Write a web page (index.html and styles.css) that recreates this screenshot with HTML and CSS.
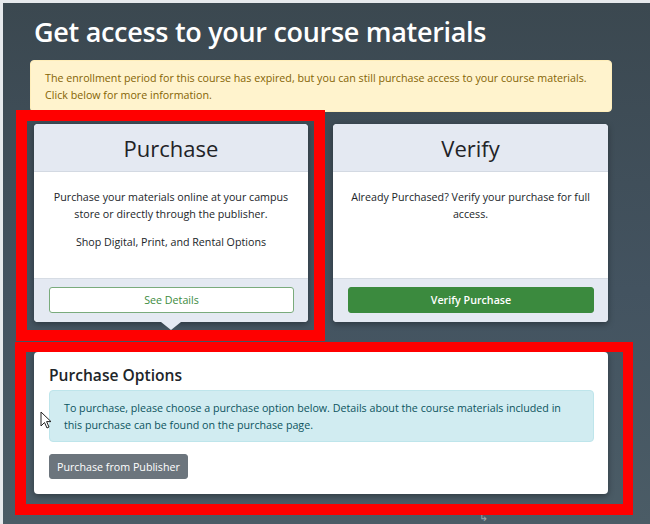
FILE: index.html
```html
<!DOCTYPE html>
<html lang="en">
<head>
<meta charset="utf-8">
<title>Get access to your course materials</title>
<link rel="stylesheet" href="styles.css">
</head>
<body>
<div class="page">
  <h1 class="title">Get access to your course materials</h1>
  <div class="alert alert-warning">The enrollment period for this course has expired, but you can still purchase access to your course materials. Click below for more information.</div>
  <div class="cards">
    <div class="card card-active">
      <div class="card-head">Purchase</div>
      <div class="card-body">
        <p>Purchase your materials online at your campus store or directly through the publisher.</p>
        <p>Shop Digital, Print, and Rental Options</p>
      </div>
      <div class="card-foot"><button class="btn btn-outline">See Details</button></div>
    </div>
    <div class="card">
      <div class="card-head">Verify</div>
      <div class="card-body">
        <p>Already Purchased? Verify your purchase for full access.</p>
      </div>
      <div class="card-foot"><button class="btn btn-green">Verify Purchase</button></div>
    </div>
  </div>
  <div class="options">
    <h2 class="options-title">Purchase Options</h2>
    <div class="alert alert-info">To purchase, please choose a purchase option below. Details about the course materials included in this purchase can be found on the purchase page.</div>
    <button class="btn btn-gray">Purchase from Publisher</button>
  </div>
  <div class="footnote">&#8627;</div>
</div>
<div class="mark mark-one"></div>
<div class="mark mark-two"></div>
<svg class="cursor" width="12" height="18" viewBox="0 0 12 18"><path d="M1 1 L1 15 L4.5 11.5 L7 17 L9 16 L6.6 10.6 L11 10.6 Z" fill="#fff" stroke="#222" stroke-width="1" stroke-linejoin="round"/></svg>
</body>
</html>
```

FILE: styles.css
```css
html, body {
  margin: 0;
  padding: 0;
}
body {
  background: #e6e9ec;
  font-family: "Open Sans", "Noto Sans", sans-serif;
  color: #212529;
  width: 650px;
  height: 524px;
  overflow: hidden;
  position: relative;
}
.page {
  margin: 3px 0 0 3px;
  height: 521px;
  box-sizing: border-box;
  padding: 10px 0 0 27px;
  background: linear-gradient(180deg, #3b4850 0%, #435360 55%, #4b5c66 100%);
  width: 647px;
  position: relative;
}
.title {
  margin: 0 0 0 4px;
  font-size: 27px;
  font-weight: 600;
  line-height: 38px;
  color: #ffffff;
  letter-spacing: -0.3px;
}
.alert {
  font-size: 10.7px;
  line-height: 17px;
  border-radius: 4px;
  box-sizing: border-box;
}
.alert-warning {
  margin-top: 9px;
  width: 582px;
  height: 52px;
  padding: 9px 14px;
  background: #fff3cd;
  border: 1px solid #ffeeba;
  color: #856404;
}
.cards {
  display: grid;
  grid-template-columns: 274px 275px;
  column-gap: 25px;
  margin: 12px 0 0 4px;
}
.card {
  background: #ffffff;
  border-radius: 4px;
  box-shadow: 0 2px 6px rgba(0, 0, 0, 0.35);
  position: relative;
  display: flex;
  flex-direction: column;
}
.card-head {
  height: 48px;
  box-sizing: border-box;
  background: #e4e9f2;
  border-bottom: 1px solid #d3d9e2;
  border-radius: 4px 4px 0 0;
  display: flex;
  align-items: center;
  justify-content: center;
  font-size: 22px;
  font-weight: 500;
  color: #1f2327;
}
.card-body {
  height: 106px;
  box-sizing: border-box;
  padding: 17px 14px 0;
  text-align: center;
  font-size: 10.7px;
  line-height: 17px;
}
.card-body p {
  margin: 0 0 11px;
}
.card-foot {
  height: 44px;
  box-sizing: border-box;
  background: #e4e9f2;
  border-top: 1px solid #d6dce4;
  border-radius: 0 0 4px 4px;
  padding: 8px 14px 0 15px;
}
.card-active::after {
  content: "";
  position: absolute;
  left: 50%;
  bottom: -8px;
  margin-left: -10px;
  border-left: 10px solid transparent;
  border-right: 10px solid transparent;
  border-top: 8px solid #e4e9f2;
}
.btn {
  font-family: inherit;
  font-size: 10.7px;
  border-radius: 3px;
  cursor: pointer;
  box-sizing: border-box;
}
.btn-outline,
.btn-green {
  width: 100%;
  height: 26px;
}
.btn-outline {
  background: #ffffff;
  border: 1px solid #7aab7c;
  color: #3d8b40;
}
.btn-green {
  background: #3b8a3e;
  border: 1px solid #3b8a3e;
  color: #ffffff;
  font-weight: 600;
}
.options {
  margin: 30px 0 0 4px;
  width: 574px;
  height: 142px;
  box-sizing: border-box;
  background: #ffffff;
  border-radius: 4px;
  box-shadow: 0 2px 6px rgba(0, 0, 0, 0.35);
  padding: 11px 14px 0 15px;
}
.options-title {
  margin: 0 0 3px;
  font-size: 15.6px;
  font-weight: 600;
  line-height: 24px;
  color: #212529;
}
.alert-info {
  height: 52px;
  padding: 9px 14px;
  background: #d1ecf1;
  border: 1px solid #bee5eb;
  color: #0c5460;
}
.btn-gray {
  margin-top: 12px;
  height: 25px;
  padding: 0 7px;
  background: #6c757d;
  border: 1px solid #6c757d;
  color: #ffffff;
}
.footnote {
  position: absolute;
  left: 476px;
  top: 507px;
  font-size: 11px;
  line-height: 13px;
  color: #9aa5ab;
}
.mark {
  position: absolute;
  border: 11px solid #ff0000;
  box-sizing: border-box;
}
.mark-one {
  left: 16px;
  top: 110px;
  width: 309px;
  height: 231px;
}
.mark-two {
  left: 15px;
  top: 342px;
  width: 618px;
  height: 173px;
  border-width: 10px 10px 11px 11px;
}
.cursor {
  position: absolute;
  left: 40px;
  top: 411px;
}
```
